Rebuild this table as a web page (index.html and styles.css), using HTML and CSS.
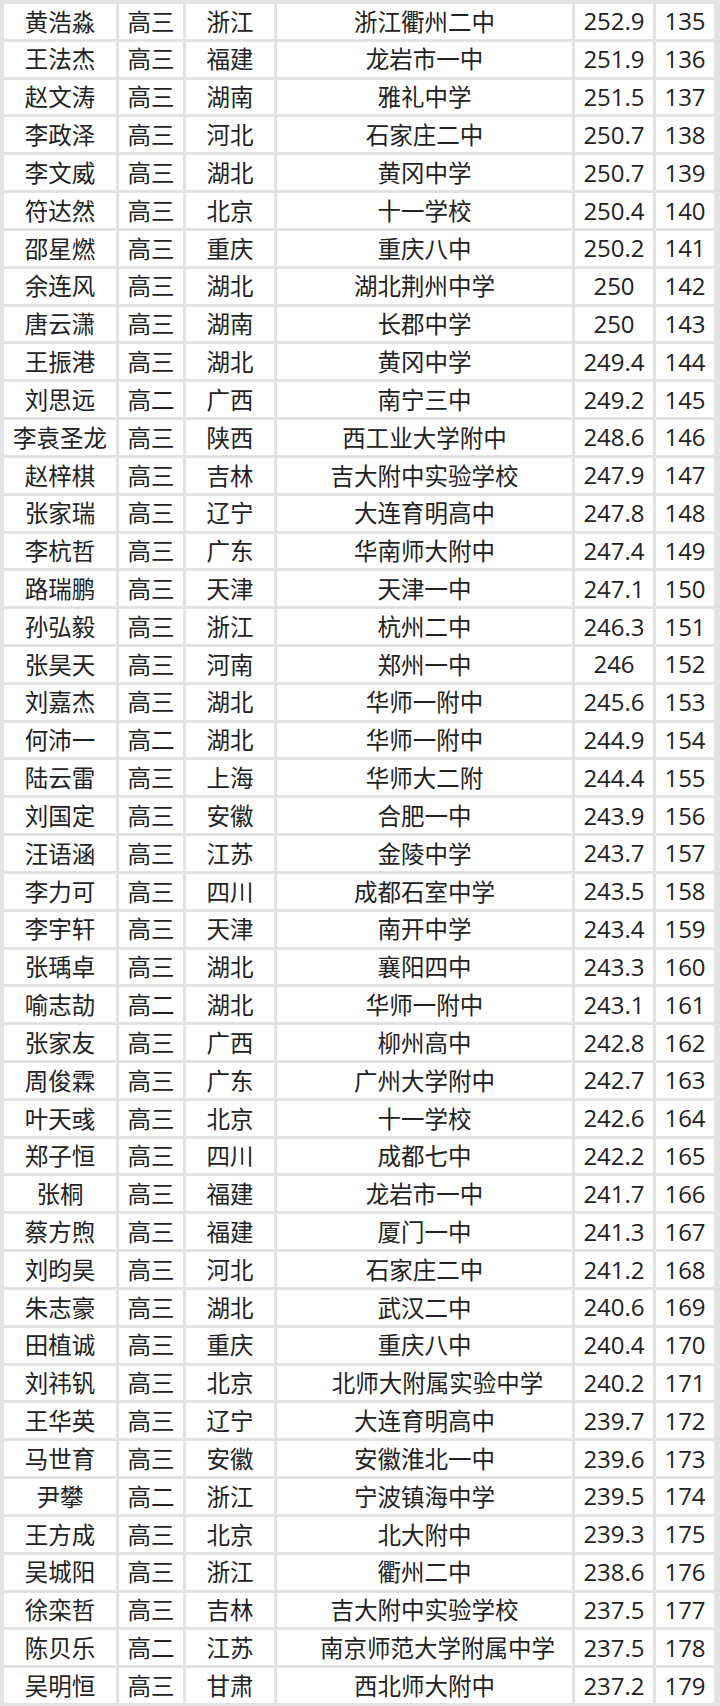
FILE: index.html
```html
<!DOCTYPE html>
<html lang="zh">
<head>
<meta charset="utf-8">
<title>成绩排名</title>
<link rel="stylesheet" href="styles.css">
</head>
<body>
<div class="sheet">
<div class="c">黄浩淼</div><div class="c">高三</div><div class="c">浙江</div><div class="c">浙江衢州二中</div><div class="c n">252.9</div><div class="c n">135</div>
<div class="c">王法杰</div><div class="c">高三</div><div class="c">福建</div><div class="c">龙岩市一中</div><div class="c n">251.9</div><div class="c n">136</div>
<div class="c">赵文涛</div><div class="c">高三</div><div class="c">湖南</div><div class="c">雅礼中学</div><div class="c n">251.5</div><div class="c n">137</div>
<div class="c">李政泽</div><div class="c">高三</div><div class="c">河北</div><div class="c">石家庄二中</div><div class="c n">250.7</div><div class="c n">138</div>
<div class="c">李文威</div><div class="c">高三</div><div class="c">湖北</div><div class="c">黄冈中学</div><div class="c n">250.7</div><div class="c n">139</div>
<div class="c">符达然</div><div class="c">高三</div><div class="c">北京</div><div class="c">十一学校</div><div class="c n">250.4</div><div class="c n">140</div>
<div class="c">邵星燃</div><div class="c">高三</div><div class="c">重庆</div><div class="c">重庆八中</div><div class="c n">250.2</div><div class="c n">141</div>
<div class="c">余连风</div><div class="c">高三</div><div class="c">湖北</div><div class="c">湖北荆州中学</div><div class="c n">250</div><div class="c n">142</div>
<div class="c">唐云潇</div><div class="c">高三</div><div class="c">湖南</div><div class="c">长郡中学</div><div class="c n">250</div><div class="c n">143</div>
<div class="c">王振港</div><div class="c">高三</div><div class="c">湖北</div><div class="c">黄冈中学</div><div class="c n">249.4</div><div class="c n">144</div>
<div class="c">刘思远</div><div class="c">高二</div><div class="c">广西</div><div class="c">南宁三中</div><div class="c n">249.2</div><div class="c n">145</div>
<div class="c">李袁圣龙</div><div class="c">高三</div><div class="c">陕西</div><div class="c">西工业大学附中</div><div class="c n">248.6</div><div class="c n">146</div>
<div class="c">赵梓棋</div><div class="c">高三</div><div class="c">吉林</div><div class="c">吉大附中实验学校</div><div class="c n">247.9</div><div class="c n">147</div>
<div class="c">张家瑞</div><div class="c">高三</div><div class="c">辽宁</div><div class="c">大连育明高中</div><div class="c n">247.8</div><div class="c n">148</div>
<div class="c">李杭哲</div><div class="c">高三</div><div class="c">广东</div><div class="c">华南师大附中</div><div class="c n">247.4</div><div class="c n">149</div>
<div class="c">路瑞鹏</div><div class="c">高三</div><div class="c">天津</div><div class="c">天津一中</div><div class="c n">247.1</div><div class="c n">150</div>
<div class="c">孙弘毅</div><div class="c">高三</div><div class="c">浙江</div><div class="c">杭州二中</div><div class="c n">246.3</div><div class="c n">151</div>
<div class="c">张昊天</div><div class="c">高三</div><div class="c">河南</div><div class="c">郑州一中</div><div class="c n">246</div><div class="c n">152</div>
<div class="c">刘嘉杰</div><div class="c">高三</div><div class="c">湖北</div><div class="c">华师一附中</div><div class="c n">245.6</div><div class="c n">153</div>
<div class="c">何沛一</div><div class="c">高二</div><div class="c">湖北</div><div class="c">华师一附中</div><div class="c n">244.9</div><div class="c n">154</div>
<div class="c">陆云雷</div><div class="c">高三</div><div class="c">上海</div><div class="c">华师大二附</div><div class="c n">244.4</div><div class="c n">155</div>
<div class="c">刘国定</div><div class="c">高三</div><div class="c">安徽</div><div class="c">合肥一中</div><div class="c n">243.9</div><div class="c n">156</div>
<div class="c">汪语涵</div><div class="c">高三</div><div class="c">江苏</div><div class="c">金陵中学</div><div class="c n">243.7</div><div class="c n">157</div>
<div class="c">李力可</div><div class="c">高三</div><div class="c">四川</div><div class="c">成都石室中学</div><div class="c n">243.5</div><div class="c n">158</div>
<div class="c">李宇轩</div><div class="c">高三</div><div class="c">天津</div><div class="c">南开中学</div><div class="c n">243.4</div><div class="c n">159</div>
<div class="c">张瑀卓</div><div class="c">高三</div><div class="c">湖北</div><div class="c">襄阳四中</div><div class="c n">243.3</div><div class="c n">160</div>
<div class="c">喻志劼</div><div class="c">高二</div><div class="c">湖北</div><div class="c">华师一附中</div><div class="c n">243.1</div><div class="c n">161</div>
<div class="c">张家友</div><div class="c">高三</div><div class="c">广西</div><div class="c">柳州高中</div><div class="c n">242.8</div><div class="c n">162</div>
<div class="c">周俊霖</div><div class="c">高三</div><div class="c">广东</div><div class="c">广州大学附中</div><div class="c n">242.7</div><div class="c n">163</div>
<div class="c">叶天彧</div><div class="c">高三</div><div class="c">北京</div><div class="c">十一学校</div><div class="c n">242.6</div><div class="c n">164</div>
<div class="c">郑子恒</div><div class="c">高三</div><div class="c">四川</div><div class="c">成都七中</div><div class="c n">242.2</div><div class="c n">165</div>
<div class="c">张桐</div><div class="c">高三</div><div class="c">福建</div><div class="c">龙岩市一中</div><div class="c n">241.7</div><div class="c n">166</div>
<div class="c">蔡方煦</div><div class="c">高三</div><div class="c">福建</div><div class="c">厦门一中</div><div class="c n">241.3</div><div class="c n">167</div>
<div class="c">刘昀昊</div><div class="c">高三</div><div class="c">河北</div><div class="c">石家庄二中</div><div class="c n">241.2</div><div class="c n">168</div>
<div class="c">朱志豪</div><div class="c">高三</div><div class="c">湖北</div><div class="c">武汉二中</div><div class="c n">240.6</div><div class="c n">169</div>
<div class="c">田植诚</div><div class="c">高三</div><div class="c">重庆</div><div class="c">重庆八中</div><div class="c n">240.4</div><div class="c n">170</div>
<div class="c">刘祎钒</div><div class="c">高三</div><div class="c">北京</div><div class="c shift">北师大附属实验中学</div><div class="c n">240.2</div><div class="c n">171</div>
<div class="c">王华英</div><div class="c">高三</div><div class="c">辽宁</div><div class="c">大连育明高中</div><div class="c n">239.7</div><div class="c n">172</div>
<div class="c">马世育</div><div class="c">高三</div><div class="c">安徽</div><div class="c">安徽淮北一中</div><div class="c n">239.6</div><div class="c n">173</div>
<div class="c">尹攀</div><div class="c">高二</div><div class="c">浙江</div><div class="c">宁波镇海中学</div><div class="c n">239.5</div><div class="c n">174</div>
<div class="c">王方成</div><div class="c">高三</div><div class="c">北京</div><div class="c">北大附中</div><div class="c n">239.3</div><div class="c n">175</div>
<div class="c">吴城阳</div><div class="c">高三</div><div class="c">浙江</div><div class="c">衢州二中</div><div class="c n">238.6</div><div class="c n">176</div>
<div class="c">徐栾哲</div><div class="c">高三</div><div class="c">吉林</div><div class="c">吉大附中实验学校</div><div class="c n">237.5</div><div class="c n">177</div>
<div class="c">陈贝乐</div><div class="c">高二</div><div class="c">江苏</div><div class="c shift">南京师范大学附属中学</div><div class="c n">237.5</div><div class="c n">178</div>
<div class="c">吴明恒</div><div class="c">高三</div><div class="c">甘肃</div><div class="c">西北师大附中</div><div class="c n">237.2</div><div class="c n">179</div>
</div>
</body>
</html>
```
FILE: styles.css
```css
html, body {
  margin: 0;
  padding: 0;
  background: #e3e3e3;
}
.sheet {
  width: 720px;
  height: 1706px;
  box-sizing: border-box;
  padding: 4px 6px 3px 4px;
  display: grid;
  grid-template-columns: 112px 64px 88px 295px 78px 58px;
  grid-template-rows: repeat(45, 1fr);
  column-gap: 3px;
  row-gap: 3px;
  font-family: "Noto Sans CJK SC", sans-serif;
  font-size: 23.5px;
  color: #222;
}
.c {
  background: #fff;
  display: flex;
  align-items: center;
  justify-content: center;
  line-height: 1;
  white-space: nowrap;
}
.shift {
  padding-left: 26px;
}
.n {
  font-family: "Open Sans", "Noto Sans CJK SC", sans-serif;
  font-size: 24px;
}
```
